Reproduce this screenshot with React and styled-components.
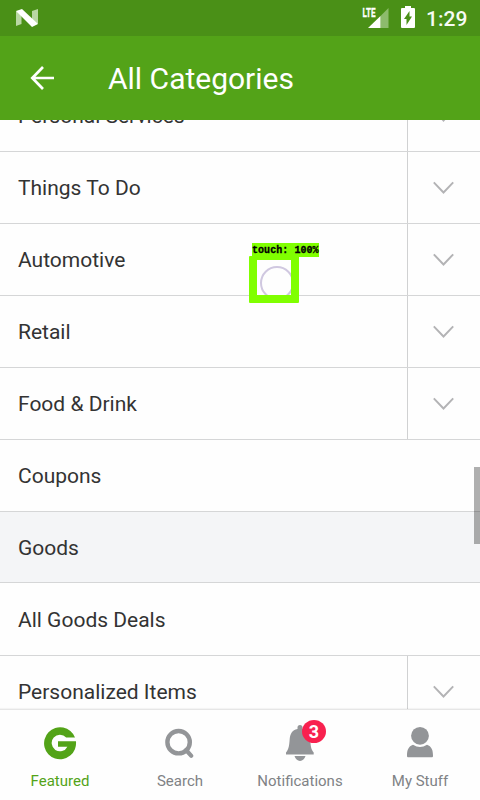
import React from "react";
import styled, { createGlobalStyle } from "styled-components";

const GlobalStyle = createGlobalStyle`
  * { box-sizing: border-box; }
  body { margin: 0; font-family: Roboto, sans-serif; background: #fefefe; }
`;

const Screen = styled.div`
  position: relative;
  width: 480px;
  height: 800px;
  display: flex;
  flex-direction: column;
  overflow: hidden;
  background: #fefefe;
`;

const StatusBar = styled.div`
  flex: none;
  height: 36px;
  padding: 0 12px 0 16px;
  display: flex;
  align-items: center;
  background: #4a9017;
  color: #fff;
`;

const StatusIcons = styled.div`
  margin-left: auto;
  display: flex;
  align-items: center;
  gap: 12px;

  svg {
    margin-bottom: 2px;
  }
`;

const Clock = styled.span`
  font-size: 21px;
  font-weight: 500;
  line-height: 36px;
  width: 42px;
  margin-left: -1px;
  padding-top: 1px;
  color: #f7fbf4;
`;

const Header = styled.header`
  flex: none;
  height: 84px;
  padding-left: 30px;
  display: flex;
  align-items: center;
  gap: 53px;
  background: #53a318;
`;

const Title = styled.h1`
  margin: 2px 0 0;
  color: #fff;
  font-size: 30px;
  font-weight: 400;
  line-height: 36px;
`;

const List = styled.main`
  flex: 1;
  min-height: 0;
  overflow: hidden;
`;

const Rows = styled.div`
  margin-top: -40px;
`;

const Row = styled.div`
  height: ${(p) => (p.$section ? 71 : p.$afterSection ? 73 : 72)}px;
  padding-top: ${(p) => (p.$afterSection ? 1 : 0)}px;
  display: flex;
  border-bottom: 1px solid #d5d6d7;
  background: ${(p) => (p.$section ? "#f4f5f7" : "#fefefe")};
`;

const RowLabel = styled.span`
  flex: 1;
  padding: 1px 0 0 18px;
  font-size: 21px;
  line-height: 71px;
  color: #333;
`;

const Expander = styled.span`
  width: 73px;
  border-left: 1px solid #d0d1d2;
  display: flex;
  align-items: center;
  justify-content: center;
  padding-right: 1px;
`;

const TabBar = styled.nav`
  flex: none;
  height: 91px;
  display: grid;
  grid-template-columns: repeat(4, 1fr);
  border-top: 1px solid #e6e6e6;
  box-shadow: 0 -1px 1px rgba(0, 0, 0, 0.04);
  background: #fefefe;
`;

const Tab = styled.div`
  display: flex;
  flex-direction: column;
  align-items: center;
  padding-top: 9px;
  color: ${(p) => (p.$active ? "#53a318" : "#808285")};
`;

const TabIcon = styled.div`
  position: relative;
  width: 48px;
  height: 48px;
`;

const TabLabel = styled.span`
  margin-top: 5px;
  font-size: 15px;
  line-height: 18px;
`;

const Badge = styled.span`
  position: absolute;
  left: 26px;
  top: 1px;
  width: 24px;
  height: 23px;
  border-radius: 50%;
  background: #f8214f;
  color: #fff;
  font-size: 18px;
  font-weight: 700;
  line-height: 24px;
  text-align: center;
`;

const ScrollThumb = styled.div`
  position: absolute;
  right: 0;
  top: 467px;
  width: 6px;
  height: 77px;
  background: rgba(0, 0, 0, 0.31);
`;

const TouchMarker = styled.div`
  position: absolute;
  left: 249px;
  top: 243px;
`;

const TouchLabel = styled.div`
  position: relative;
  margin-left: 3px;
  padding-top: 1px;
  width: 67px;
  height: 14px;
  background: #80ff00;
  color: #000;
  font: 700 10px/13px "Liberation Mono", monospace;
  letter-spacing: 0.06px;
  -webkit-text-stroke: 0.3px #000;
  white-space: pre;
`;

const TouchBox = styled.div`
  width: 50px;
  height: 47px;
  margin-top: -1px;
  border: 8px solid #80ff00;
  border-width: 4px 8px 8px;
  border-radius: 1px;
  overflow: hidden;
`;

const TouchRing = styled.div`
  width: 34px;
  height: 34px;
  margin: 6px 0 0 3px;
  border: 2px solid #d0c8e0;
  border-radius: 50%;
`;

const categories = [
  { label: "Personal Services", expandable: true },
  { label: "Things To Do", expandable: true },
  { label: "Automotive", expandable: true },
  { label: "Retail", expandable: true },
  { label: "Food & Drink", expandable: true },
  { label: "Coupons" },
  { label: "Goods", section: true },
  { label: "All Goods Deals", afterSection: true },
  { label: "Personalized Items", expandable: true },
];

const NougatIcon = () => (
  <svg width="22" height="20" viewBox="0 0 22 20">
    <path d="M0 3 5.5 6V16L0 18ZM16 3 22 1V16L16 13Z" fill="#b9d7a4" />
    <path d="M0 3 6 1 22 16 16 19Z" fill="#fff" />
  </svg>
);

const SignalIcon = () => (
  <svg width="27" height="24" viewBox="0 0 27 24">
    <path d="M26.5 3V23H18.5V11Z" fill="#8dbb6c" />
    <path d="M6 23 18.5 11V23Z" fill="#fff" />
    <text x="0.5" y="11.5" fill="#fff" stroke="#fff" strokeWidth="0.3" fontFamily="Roboto" fontSize="13" fontWeight="700" textLength="13" lengthAdjust="spacingAndGlyphs">LTE</text>
  </svg>
);

const BatteryIcon = () => (
  <svg width="14" height="22" viewBox="0 0 14 22">
    <path d="M4 0H10V2H13Q14 2 14 3V21Q14 22 13 22H1Q0 22 0 21V3Q0 2 1 2H4Z" fill="#fff" />
    <path d="M8.5 5V10.5H11L5.5 19V13H3Z" fill="#4a9017" />
  </svg>
);

const BackIcon = () => (
  <svg width="25" height="24" viewBox="0 0 25 24">
    <path d="M13 1 2.3 12 13 23M2.3 12H24" fill="none" stroke="#fff" strokeWidth="2.7" />
  </svg>
);

const Chevron = () => (
  <svg width="21" height="14" viewBox="0 0 21 14">
    <path d="M0.8 1.3 10.5 11.5 20.2 1.3" fill="none" stroke="#b3b3b5" strokeWidth="1.9" />
  </svg>
);

const GrouponIcon = () => (
  <svg width="48" height="48" viewBox="0 0 48 48">
    <path d="M39 18.5A16 16 0 1 0 39.95 22.3H22V27.7H31.4A8.3 8.3 0 1 1 30.2 18.5Z" fill="#53a318" />
  </svg>
);

const SearchIcon = () => (
  <svg width="48" height="48" viewBox="0 0 48 48" fill="none" stroke="#939598">
    <circle cx="22.6" cy="23.2" r="11.2" strokeWidth="4.4" />
    <path d="M30 31 35.3 36.8" strokeWidth="4.2" strokeLinecap="round" />
  </svg>
);

const BellIcon = () => (
  <svg width="48" height="48" viewBox="0 -0.9 48 48" fill="#939598">
    <path d="M21.5 9V7.5A2.5 2.5 0 0 1 26.5 7.5V9C32 10 34 14 34.3 19C34.6 26 35 29.5 37.7 32.5V34.5H10V32.5C13 29 13.2 25 13.7 19C14.2 14 16 10 21.5 9Z" />
    <path d="M18.5 36.2H29.5Q28 41 24 41T18.5 36.2Z" />
  </svg>
);

const PersonIcon = () => (
  <svg width="48" height="48" viewBox="0 -1 48 48" fill="#939598">
    <circle cx="24" cy="15.8" r="8.9" />
    <path d="M17 24.7Q24 29.5 31 24.7C35.5 26.5 37 29.5 37 36Q37 37.2 36 37.2H12Q11 37.2 11 36C11 29.5 12.5 26.5 17 24.7Z" />
  </svg>
);

const tabs = [
  { label: "Featured", Icon: GrouponIcon, active: true },
  { label: "Search", Icon: SearchIcon },
  { label: "Notifications", Icon: BellIcon, count: 3 },
  { label: "My Stuff", Icon: PersonIcon },
];

export default function App() {
  return (
    <Screen>
      <GlobalStyle />
      <StatusBar>
        <NougatIcon />
        <StatusIcons>
          <SignalIcon />
          <BatteryIcon />
          <Clock>1:29</Clock>
        </StatusIcons>
      </StatusBar>
      <Header>
        <BackIcon />
        <Title>All Categories</Title>
      </Header>
      <List>
        <Rows>
          {categories.map((c) => (
            <Row key={c.label} $section={c.section} $afterSection={c.afterSection}>
              <RowLabel>{c.label}</RowLabel>
              {c.expandable && (
                <Expander>
                  <Chevron />
                </Expander>
              )}
            </Row>
          ))}
        </Rows>
      </List>
      <TabBar>
        {tabs.map(({ label, Icon, active, count }) => (
          <Tab key={label} $active={active}>
            <TabIcon>
              <Icon />
              {count && <Badge>{count}</Badge>}
            </TabIcon>
            <TabLabel>{label}</TabLabel>
          </Tab>
        ))}
      </TabBar>
      <ScrollThumb />
      <TouchMarker>
        <TouchLabel>touch: 100%</TouchLabel>
        <TouchBox>
          <TouchRing />
        </TouchBox>
      </TouchMarker>
    </Screen>
  );
}
